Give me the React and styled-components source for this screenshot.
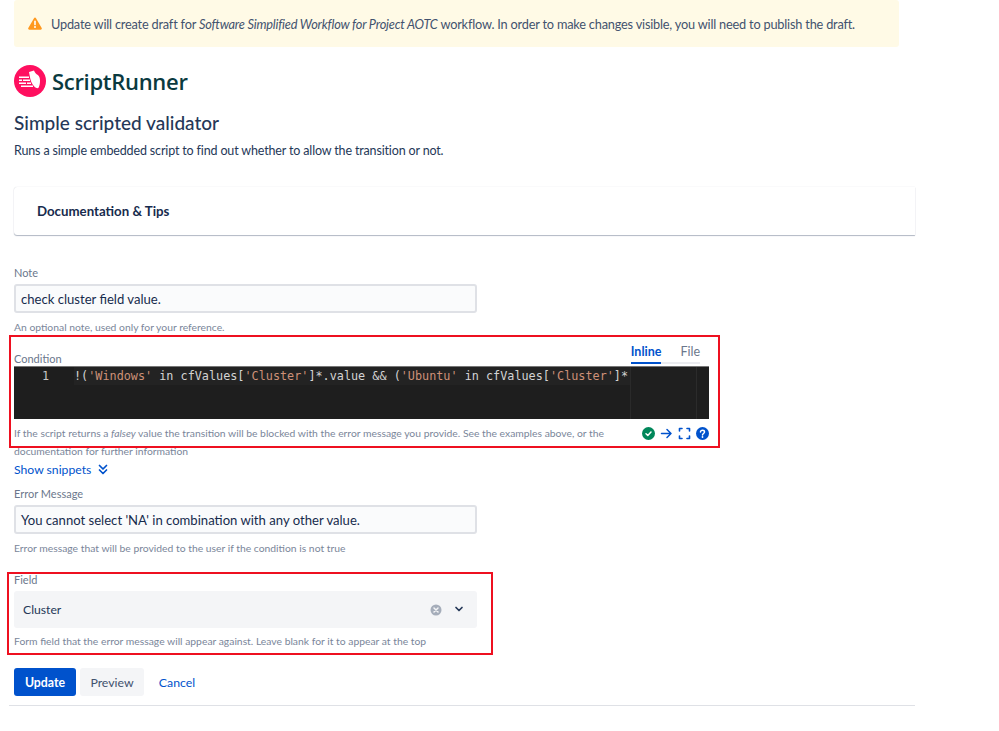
import React from 'react';
import styled, { createGlobalStyle } from 'styled-components';

const GlobalStyle = createGlobalStyle`
  html, body {
    margin: 0;
    background: #fff;
    font-family: "Lato", "Open Sans", sans-serif;
    color: #172b4d;
  }
`;

const Page = styled.div`
  width: 999px;
  height: 731px;
  overflow: hidden;
  box-sizing: border-box;
  padding-left: 14px;
`;

const Banner = styled.div`
  width: 885px;
  height: 47px;
  box-sizing: border-box;
  background: #fffae6;
  border-radius: 3px;
  display: flex;
  align-items: center;
  gap: 9px;
  padding: 0 0 0 14px;
  font-size: 12.75px;
  letter-spacing: -0.2px;
  color: #42526e;
  white-space: nowrap;

  svg { flex: none; }
`;

const Brand = styled.div`
  display: flex;
  align-items: center;
  gap: 6px;
  height: 32px;
  margin-top: 18px;
`;

const BrandName = styled.span`
  font-family: "Open Sans", sans-serif;
  font-size: 22px;
  font-weight: 600;
  letter-spacing: -0.3px;
  color: #0a3a3f;
`;

const Title = styled.h1`
  margin: 13px 0 0;
  font-size: 19px;
  line-height: 26px;
  font-weight: 500;
  color: #253858;
`;

const Lead = styled.p`
  margin: 6px 0 0;
  font-size: 12.5px;
  letter-spacing: -0.15px;
  line-height: 18px;
  color: #253858;
`;

const DocsCard = styled.div`
  width: 901px;
  height: 48px;
  margin-top: 27px;
  box-sizing: border-box;
  display: flex;
  align-items: center;
  padding-left: 23px;
  background: #fff;
  border-radius: 3px 0 0 3px;
  box-shadow: 0 1px 1px rgba(9, 30, 66, 0.3), 0 0 1px rgba(9, 30, 66, 0.2);
  font-size: 13.25px;
  font-weight: 700;
  color: #172b4d;
`;

const Label = styled.div`
  font-size: 11px;
  line-height: 14px;
  color: #6b778c;
`;

const Helper = styled.div`
  font-size: 10.35px;
  line-height: 19px;
  margin-top: ${(p) => p.$top ?? 5}px;
  color: #7a869a;
  white-space: nowrap;

  em { font-style: italic; }
`;

const TextInput = styled.div`
  width: 463px;
  height: 29px;
  box-sizing: border-box;
  margin-top: 4px;
  display: flex;
  align-items: center;
  padding-left: 5px;
  background: #fafbfc;
  border: 2px solid #dfe1e6;
  border-radius: 3px;
  font-size: 13.1px;
  color: #172b4d;
`;

const Field = styled.section`
  position: relative;
  margin-top: ${(p) => p.$top}px;
`;

// red annotation drawn over the screenshot content
const RedBox = styled.div`
  position: absolute;
  left: ${(p) => p.$left}px;
  top: ${(p) => p.$top}px;
  width: ${(p) => p.$width}px;
  height: ${(p) => p.$height}px;
  box-sizing: border-box;
  border: 2px solid #ee1020;
  pointer-events: none;
`;

const ConditionHead = styled.div`
  width: 686px;
  height: 29px;
  display: flex;
  align-items: flex-end;
  justify-content: space-between;
`;

const Tabs = styled.div`
  display: flex;
  gap: 19px;
  margin-bottom: 2px;
  box-shadow: inset 0 -2px 0 #ebecf0;
`;

const Tab = styled.div`
  font-size: 12.5px;
  line-height: 16px;
  height: 24px;
  box-sizing: border-box;
  padding-top: 4px;
  font-weight: ${(p) => (p.$active ? 700 : 400)};
  color: ${(p) => (p.$active ? '#0052cc' : '#6b778c')};
  box-shadow: ${(p) => (p.$active ? 'inset 0 -2px 0 #0052cc' : 'none')};
`;

const Editor = styled.div`
  width: 695px;
  height: 53px;
  display: flex;
  background: #1e1e1e;
  border-top: 1px solid #777;
  box-sizing: border-box;
  font-family: "DejaVu Sans Mono", "Liberation Mono", monospace;
  font-size: 11.8px;
  line-height: 18px;
  color: #d4d4d4;
  overflow: hidden;
`;

const Gutter = styled.div`
  width: 35px;
  text-align: right;
  color: #c6c6c6;
  flex: none;
`;

const CodeArea = styled.div`
  width: 556px;
  margin-left: 25px;
  height: 18px;
  flex: none;
  white-space: pre;
  overflow: hidden;
  background: #232323;
`;

const Str = styled.span`
  color: #ce9178;
`;

const Minimap = styled.div`
  width: 66px;
  flex: none;
  background: #1f1f1f;
  border-left: 1px solid #2a2a2a;
  box-sizing: border-box;
`;

const ScrollTrack = styled.div`
  flex: 1;
  background: #1e1e1e;
  border-left: 1px solid #2b2b2b;
`;

const EditorFoot = styled.div`
  width: 695px;
  height: 28px;
  display: flex;
  align-items: center;
  justify-content: space-between;
`;

const IconRow = styled.div`
  display: flex;
  align-items: center;
  gap: 5px;

  svg { flex: none; }
`;

const SnippetLink = styled.div`
  margin-top: -1px;
  display: flex;
  align-items: center;
  gap: 7px;
  height: 18px;
  font-size: 12.2px;
  color: #0052cc;
`;

const Select = styled.div`
  width: 463px;
  height: 37px;
  margin-top: 4px;
  box-sizing: border-box;
  display: flex;
  align-items: center;
  justify-content: space-between;
  padding: 0 13px 0 9px;
  background: #f4f5f7;
  border-radius: 3px;
  font-size: 12.2px;
  color: #253858;
`;

const SelectIcons = styled.div`
  display: flex;
  align-items: center;
  gap: 12px;
`;

const Actions = styled.div`
  display: flex;
  align-items: center;
  height: 28px;
  margin-top: 17px;
`;

const Button = styled.button`
  height: 28px;
  box-sizing: border-box;
  padding: 0;
  border: none;
  border-radius: 3px;
  width: ${(p) => p.$width}px;
  margin-right: ${(p) => p.$gap}px;
  font-family: inherit;
  font-size: 12.3px;
  font-weight: ${(p) => (p.$kind === 'primary' ? 700 : 400)};
  color: ${(p) => (p.$kind === 'primary' ? '#fff' : p.$kind === 'link' ? '#0052cc' : '#42526e')};
  background: ${(p) => (p.$kind === 'primary' ? '#0052cc' : p.$kind === 'link' ? 'transparent' : '#f4f5f7')};
`;

const Divider = styled.hr`
  width: 906px;
  height: 1px;
  margin: 9px 0 0 -5px;
  border: none;
  background: #dfe1e6;
`;

const WarnIcon = () => (
  <svg width="14" height="13" viewBox="0 0 14 13">
    <path d="M7 .6c.4 0 .8.2 1 .6l5.700 9.900c.4.7-.1 1.600-1 1.600H1.300c-.9 0-1.400-.9-1-1.600L6 1.200c.2-.4.6-.6 1-.6z" fill="#ff991f" />
    <rect x="6.200" y="3.600" width="1.600" height="4.800" rx=".8" fill="#fff" />
    <circle cx="7" cy="10.100" r="1" fill="#fff" />
  </svg>
);

const BrandMark = () => (
  <svg width="32" height="32" viewBox="0 0 32 32">
    <circle cx="16" cy="16" r="16" fill="#ff0f5f" />
    <path d="M15 7l5-1.500c.8 2.200 2.200 3.400 3.800 4.600 1.500 1.100 2.200 3 2.200 5.400 0 2.600-.4 5-1.200 6.800-.4.8-1.300 1.200-2.200.8-2.300-1-3.900-3.200-5-5.600C16.500 15 16 12.500 15 7z" fill="#fff" />
    <g fill="#fff">
      <rect x="5" y="11.500" width="10" height="1.500" />
      <rect x="5" y="14.500" width="3" height="1.500" />
      <rect x="9" y="14.500" width="7" height="1.500" />
      <rect x="5" y="17.500" width="7" height="1.500" />
      <rect x="13" y="17.500" width="4" height="1.500" />
      <rect x="7" y="20.500" width="12" height="1.500" />
    </g>
  </svg>
);

const OkIcon = () => (
  <svg width="13" height="13" viewBox="0 0 13 13">
    <circle cx="6.500" cy="6.500" r="6.500" fill="#00875a" />
    <path d="M4 6.800l1.800 1.600L9 5" fill="none" stroke="#fff" strokeWidth="1.500" strokeLinecap="round" strokeLinejoin="round" />
  </svg>
);

const ArrowIcon = () => (
  <svg width="13" height="13" viewBox="0 0 13 13">
    <path d="M1.500 6.500h9.500M7 2.500l4 4-4 4" fill="none" stroke="#0052cc" strokeWidth="1.500" strokeLinecap="round" strokeLinejoin="round" />
  </svg>
);

const ExpandIcon = () => (
  <svg width="13" height="13" viewBox="0 0 13 13">
    <path d="M1.500 4V1.500H4M9 1.500h2.500V4M11.500 9v2.500H9M4 11.500H1.500V9" fill="none" stroke="#0052cc" strokeWidth="1.600" strokeLinecap="round" strokeLinejoin="round" />
  </svg>
);

const HelpIcon = () => (
  <svg width="13" height="13" viewBox="0 0 13 13">
    <circle cx="6.500" cy="6.500" r="6.500" fill="#0052cc" />
    <path d="M4.500 5.100c0-1.100.9-1.800 2-1.800s2 .7 2 1.700c0 1.500-2 1.500-2 2.900" fill="none" stroke="#fff" strokeWidth="1.500" strokeLinecap="round" />
    <circle cx="6.500" cy="10" r=".9" fill="#fff" />
  </svg>
);

const DoubleChevron = () => (
  <svg width="10" height="11" viewBox="0 0 10 11">
    <path d="M1.500 1.500L5 5l3.500-3.500M1.500 6L5 9.500 8.500 6" fill="none" stroke="#0052cc" strokeWidth="1.700" strokeLinecap="round" strokeLinejoin="round" />
  </svg>
);

const ClearIcon = () => (
  <svg width="12" height="12" viewBox="0 0 12 12">
    <circle cx="6" cy="6" r="5.500" fill="#a5adba" />
    <path d="M4 4l4 4M8 4l-4 4" stroke="#f4f5f7" strokeWidth="1.500" strokeLinecap="round" />
  </svg>
);

const ChevronDown = () => (
  <svg width="10" height="7" viewBox="0 0 10 7">
    <path d="M2 1.500L5 4.500l3-3" fill="none" stroke="#253858" strokeWidth="1.700" strokeLinecap="round" strokeLinejoin="round" />
  </svg>
);

const App = () => (
  <Page>
    <GlobalStyle />
    <Banner>
      <WarnIcon />
      <span>
        Update will create draft for <em>Software Simplified Workflow for Project AOTC</em> workflow. In order to make changes visible, you will need to publish the draft.
      </span>
    </Banner>

    <Brand>
      <BrandMark />
      <BrandName>ScriptRunner</BrandName>
    </Brand>

    <Title>Simple scripted validator</Title>
    <Lead>Runs a simple embedded script to find out whether to allow the transition or not.</Lead>

    <DocsCard>Documentation &amp; Tips</DocsCard>

    <Field $top={31}>
      <Label>Note</Label>
      <TextInput>check cluster field value.</TextInput>
      <Helper>An optional note, used only for your reference.</Helper>
    </Field>

    <Field $top={0}>
      <ConditionHead>
        <Label>Condition</Label>
        <Tabs>
          <Tab $active>Inline</Tab>
          <Tab>File</Tab>
        </Tabs>
      </ConditionHead>
      <Editor>
        <Gutter>1</Gutter>
        <CodeArea>
          !(<Str>'Windows'</Str> in cfValues[<Str>'Cluster'</Str>]*.value &amp;&amp; (<Str>'Ubuntu'</Str> in cfValues[<Str>'Cluster'</Str>]*
        </CodeArea>
        <Minimap />
        <ScrollTrack />
      </Editor>
      <EditorFoot>
        <Helper $top={0}>
          If the script returns a <em>falsey</em> value the transition will be blocked with the error message you provide. See the examples above, or the
        </Helper>
        <IconRow>
          <OkIcon />
          <ArrowIcon />
          <ExpandIcon />
          <HelpIcon />
        </IconRow>
      </EditorFoot>
      <Helper $top={-5}>documentation for further information</Helper>
      <RedBox $left={-5} $top={-2} $width={711} $height={113} />
    </Field>

    <SnippetLink>
      Show snippets <DoubleChevron />
    </SnippetLink>

    <Field $top={9}>
      <Label>Error Message</Label>
      <TextInput>You cannot select 'NA' in combination with any other value.</TextInput>
      <Helper>Error message that will be provided to the user if the condition is not true</Helper>
    </Field>

    <Field $top={15}>
      <Label>Field</Label>
      <Select>
        Cluster
        <SelectIcons>
          <ClearIcon />
          <ChevronDown />
        </SelectIcons>
      </Select>
      <Helper $top={4}>Form field that the error message will appear against. Leave blank for it to appear at the top</Helper>
      <RedBox $left={-7} $top={-1} $width={486} $height={83} />
    </Field>

    <Actions>
      <Button $kind="primary" $width={62} $gap={4}>Update</Button>
      <Button $width={64} $gap={4}>Preview</Button>
      <Button $kind="link" $width={58} $gap={0}>Cancel</Button>
    </Actions>
    <Divider />
  </Page>
);

export default App;
